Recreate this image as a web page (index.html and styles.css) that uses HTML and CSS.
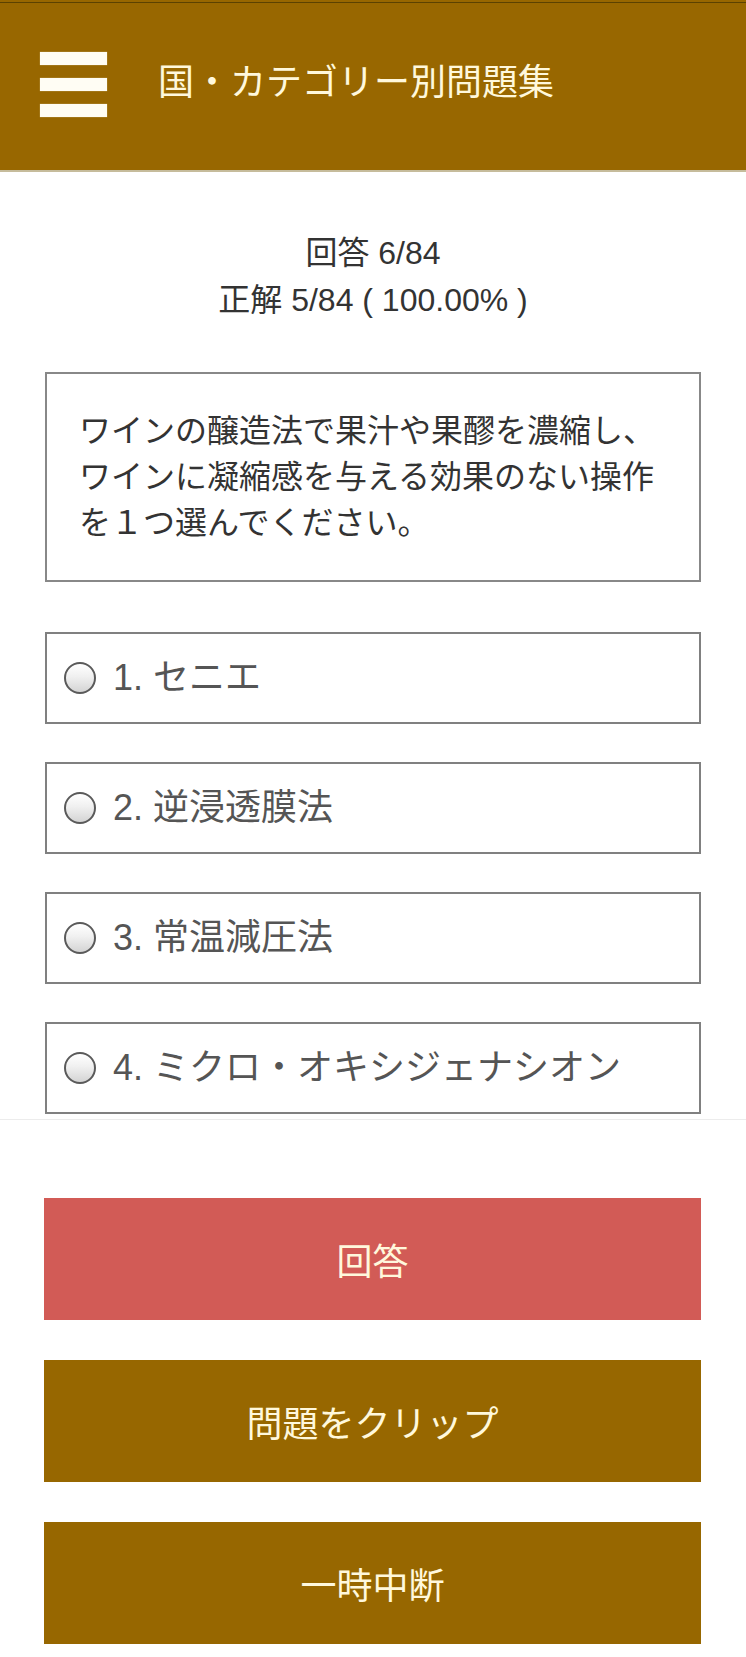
FILE: index.html
```html
<!DOCTYPE html>
<html lang="ja">
<head>
<meta charset="utf-8">
<title>国・カテゴリー別問題集</title>
<link rel="stylesheet" href="styles.css">
</head>
<body>
<header class="topbar">
  <div class="hamburger"><span></span><span></span><span></span></div>
  <h1 class="title">国・カテゴリー別問題集</h1>
</header>
<main class="content">
  <div class="stats">
    <p>回答 6/84</p>
    <p>正解 5/84 ( 100.00% )</p>
  </div>
  <div class="question">ワインの醸造法で果汁や果醪を濃縮し、ワインに凝縮感を与える効果のない操作を１つ選んでください。</div>
  <ul class="options">
    <li class="option"><span class="radio"></span><span class="label">1. セニエ</span></li>
    <li class="option"><span class="radio"></span><span class="label">2. 逆浸透膜法</span></li>
    <li class="option"><span class="radio"></span><span class="label">3. 常温減圧法</span></li>
    <li class="option"><span class="radio"></span><span class="label">4. ミクロ・オキシジェナシオン</span></li>
  </ul>
</main>
<footer class="actions">
  <button class="btn btn-answer">回答</button>
  <button class="btn btn-brown">問題をクリップ</button>
  <button class="btn btn-brown">一時中断</button>
</footer>
</body>
</html>
```
FILE: styles.css
```css
* { box-sizing: border-box; }
html, body { margin: 0; padding: 0; background: #fff; }
body {
  font-family: "Liberation Sans", "Noto Sans CJK JP", sans-serif;
  color: #333;
}
.topbar {
  height: 172px;
  background: #986700;
  border-bottom: 2px solid #c6bc9c;
  box-shadow: inset 0 2px 0 #986700, inset 0 3px 0 #5c4200;
  display: flex;
  align-items: center;
  padding-left: 40px;
}
.hamburger {
  display: flex;
  flex-direction: column;
  gap: 13px;
  width: 67px;
  margin-top: -2px;
}
.hamburger span {
  display: block;
  height: 13px;
  background: #fffdf4;
  box-shadow: 0 0 1px rgba(255,255,240,0.6);
}
.title {
  margin: 0 0 0 51px;
  font-size: 36px;
  font-weight: 400;
  color: #fff8dc;
  line-height: 1;
  margin-top: -4px;
}
.content {
  padding: 0 45px;
}
.stats {
  margin-top: 58px;
  text-align: center;
  font-size: 32px;
  line-height: 47px;
  color: #333;
}
.stats p { margin: 0; }
.question {
  margin-top: 48px;
  border: 2px solid #888;
  padding: 34px 32px;
  font-size: 32px;
  line-height: 46px;
  color: #333;
}
.options {
  list-style: none;
  margin: 50px 0 0;
  padding: 0;
  display: flex;
  flex-direction: column;
  gap: 38px;
}
.option {
  height: 92px;
  border: 2px solid #808080;
  display: flex;
  align-items: center;
  padding-left: 17px;
}
.radio {
  width: 32px;
  height: 32px;
  border-radius: 50%;
  border: 2px solid #5a5a5a;
  background: linear-gradient(#ffffff 0%, #f0f0f0 45%, #d4d4d4 100%);
  flex: none;
}
.label {
  margin-left: 17px;
  font-size: 36px;
  color: #555;
  line-height: 1;
}
.actions {
  margin-top: 5px;
  border-top: 1px solid #ececec;
  padding: 78px 45px 13px 44px;
  display: flex;
  flex-direction: column;
  gap: 40px;
}
.btn {
  display: block;
  width: 100%;
  height: 122px;
  border: none;
  margin: 0;
  padding: 0;
  font-family: "Liberation Sans", "Noto Sans CJK JP", sans-serif;
  font-size: 36px;
  color: #fff8dc;
  cursor: pointer;
}
.btn-answer { background: #d25b56; }
.btn-brown { background: #976700; }
```
